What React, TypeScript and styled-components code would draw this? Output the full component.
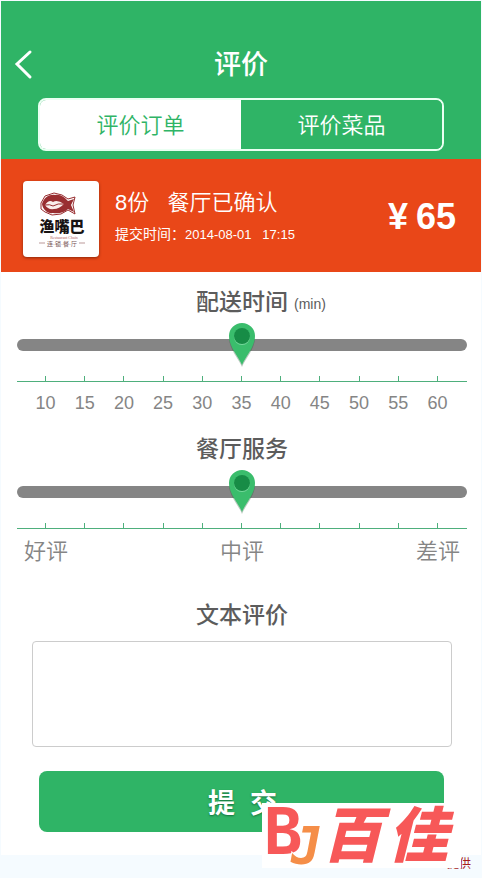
import React, { useState } from 'react';
import styled, { createGlobalStyle, css } from 'styled-components';

const sans = `"Liberation Sans", "Noto Sans CJK SC", sans-serif`;
const green = '#2fb466';

const GlobalStyle = createGlobalStyle`
  *, *::before, *::after { box-sizing: border-box; }
  body { margin: 0; background: #f5fbff; font-family: ${sans}; }
  h1, h2, p { margin: 0; }
  button, textarea, input { font-family: inherit; }
`;

const Page = styled.div`
  position: relative;
  padding: 1px 1px 0;
`;

const Screen = styled.main`
  background: #fff;
  padding-bottom: 23px;
`;

const Header = styled.header`
  background: ${green};
  padding: 40px 37px 8px;
`;

const TitleBar = styled.div`
  display: grid;
  grid-template-columns: 28px 1fr 28px;
  align-items: center;
  height: 48px;
  margin: 0 -28px 9px;
`;

const BackButton = styled.button`
  display: flex;
  padding: 0;
  border: 0;
  background: none;
  color: #fff;
  cursor: pointer;
`;

const Title = styled.h1`
  color: #fff;
  font-size: 27px;
  line-height: 48px;
  font-weight: 500;
  text-align: center;
`;

const Tabs = styled.div`
  display: grid;
  grid-template-columns: 1fr 1fr;
  height: 53px;
  border: 2px solid #eafff2;
  border-radius: 8px;
  overflow: hidden;
`;

const Tab = styled.button<{ $active: boolean }>`
  padding: 0 0 4px;
  border: 0;
  background: ${p => (p.$active ? '#fff' : green)};
  color: ${p => (p.$active ? green : '#fff')};
  font-size: 22px;
  font-weight: 350;
  cursor: pointer;
`;

const Order = styled.section`
  display: flex;
  align-items: center;
  gap: 16px;
  height: 113px;
  padding: 6px 25px 0 22px;
  background: #e94718;
  color: #fff;
`;

const Thumb = styled.div`
  display: flex;
  width: 76px;
  height: 76px;
  background: #fff;
  border-radius: 4px;
  box-shadow: 0 1px 3px rgba(80, 20, 0, 0.6);
`;

const OrderInfo = styled.div`
  flex: 1;
  padding-bottom: 4px;
  white-space: pre;
`;

const Status = styled.p`
  font-size: 22px;
  line-height: 32px;
  font-weight: 350;
`;

const Submitted = styled.p`
  font-size: 14px;
  line-height: 24px;
  margin-top: 3px;
`;

const Moment = styled.time`
  font-size: 13px;
`;

const Price = styled.strong`
  display: flex;
  gap: 8px;
  padding-bottom: 4px;
  font-size: 36px;
  line-height: 40px;
`;

const Group = styled.section`
  height: 147px;
  padding: 12px 14px 0 16px;
`;

const headingText = css`
  color: #5c5c5c;
  font-size: 23px;
  line-height: 36px;
  font-weight: 500;
  text-align: center;
`;

const Heading = styled.h2`
  ${headingText}
  display: grid;
  grid-template-columns: 1fr auto 1fr;
  height: 36px;

  &::before { content: ''; }
`;

const FieldLabel = styled.label`
  ${headingText}
  display: block;
`;

const Unit = styled.small`
  padding-left: 6px;
  font-size: 14px;
  line-height: 40px;
  font-weight: 400;
  text-align: left;
`;

const SliderBox = styled.div`
  position: relative;
  height: 48px;
  margin-top: 1px;
`;

const Range = styled.input`
  appearance: none;
  display: block;
  width: 100%;
  height: 48px;
  margin: 0;
  background: none;
  cursor: pointer;

  &::-webkit-slider-runnable-track {
    height: 12px;
    border-radius: 6px;
    background: #858585;
  }
  &::-webkit-slider-thumb {
    appearance: none;
    width: 28px;
    height: 12px;
    background: transparent;
  }
`;

const Marker = styled.div`
  position: absolute;
  top: 0;
  width: 32px;
  margin-left: -16px;
  height: 48px;
  pointer-events: none;
`;

const Ticks = styled.div`
  display: grid;
  grid-template-columns: repeat(11, 1fr);
  height: 13px;
  padding: 7px 10px 0 9px;
  border-bottom: 1px solid #4eaf7c;
`;

const Tick = styled.i`
  justify-self: center;
  width: 1px;
  background: #4eaf7c;
`;

const Scale = styled.div`
  display: grid;
  grid-template-columns: repeat(11, 1fr);
  padding: 0 10px 0 9px;
  color: #858585;
  font-size: 18px;
  line-height: 42px;
  text-align: center;
`;

const Ratings = styled.div`
  display: flex;
  justify-content: space-between;
  padding: 0 7px;
  color: #858585;
  font-size: 22px;
  line-height: 46px;
  font-weight: 350;
`;

const Review = styled.section`
  padding: 31px 29px 0 31px;
`;

const ReviewText = styled.textarea`
  display: block;
  width: 100%;
  height: 106px;
  margin-top: 8px;
  padding: 12px;
  border: 1px solid #ccc;
  border-radius: 4px;
  background: #fff;
  font-size: 16px;
  resize: none;
`;

const Submit = styled.button`
  display: block;
  width: calc(100% - 75px);
  height: 61px;
  margin: 24px 37px 0 38px;
  padding: 0 0 0 2px;
  border: 0;
  border-radius: 8px;
  background: ${green};
  color: #fff;
  font-size: 27px;
  font-weight: 700;
  white-space: pre;
  text-shadow: 0 1px 2px rgba(0, 70, 30, 0.6);
  cursor: pointer;
`;

const Credit = styled.p`
  padding-right: 10px;
  color: #a81c1c;
  font-size: 12px;
  line-height: 18px;
  text-align: right;
`;

const Watermark = styled.div`
  position: absolute;
  right: 21px;
  bottom: 5px;
  display: flex;
  background: #fff;
`;

function BackIcon() {
  return (
    <svg width="28" height="32" viewBox="0 0 28 32" fill="none" aria-hidden="true">
      <path d="M20 3 L7 15 L20 28" stroke="currentColor" strokeWidth="3" strokeLinecap="round" strokeLinejoin="miter" />
    </svg>
  );
}

function RestaurantLogo() {
  return (
    <svg width="76" height="76" viewBox="0 0 76 76" role="img" aria-label="渔嘴巴">
      <path d="M18 22 L22 15 L31 12 L39 14 L45 18 L52 16 L50 24 L52 33 L45 29 L38 33 L29 34 L22 31 L18 28Z" fill="none" stroke="#992e31" strokeWidth="1" strokeLinejoin="round" />
      <path d="M19 23 C21 16 27 13 32 14 C38 13 42 17 45 20 L51 18 L48 24 L51 31 L45 28 C41 32 35 33 30 32 C25 33 20 29 19 23Z" fill="#992e31" />
      <path d="M22 24 Q26 18 30 21 Q34 18 41 23 Q36 28 31 28 Q25 29 22 24Z" fill="#f9eeec" />
      <path d="M22 24 Q27 23 30 25 Q35 22 41 23" fill="none" stroke="#992e31" strokeWidth="1" />
      <text x="39" y="51" textAnchor="middle" fontSize="15" fontWeight="900" fill="#171313">渔嘴巴</text>
      <text x="41" y="58" textAnchor="middle" fontSize="4" fill="#b26461" fontFamily="Liberation Serif">Restaurant Chain</text>
      <path d="M16 62 H22 M56 62 H62" stroke="#b99" strokeWidth="1" />
      <text x="39" y="65" textAnchor="middle" fontSize="6" fill="#755">连·锁·餐·厅</text>
    </svg>
  );
}

function Pin() {
  return (
    <svg width="32" height="48" viewBox="0 0 32 48" aria-hidden="true">
      <path d="M16 45 C13 37 3 27 3 16 A13 13 0 0 1 29 16 C29 27 19 37 16 45Z" fill="#174f2c" opacity=".3" transform="translate(0 1)" />
      <path d="M16 44 C13 36 3 26 3 15 A13 13 0 0 1 29 15 C29 26 19 36 16 44Z" fill="#3abd6c" />
      <circle cx="16" cy="16" r="8" fill="#76d79b" />
      <circle cx="16" cy="15" r="8" fill="#178c46" />
    </svg>
  );
}

function BrandLogo() {
  return (
    <svg width="199" height="65" viewBox="0 0 199 65" role="img" aria-label="BJ 百佳">
      <text x="2" y="51" fontSize="64" fontWeight="700" fontFamily="DejaVu Sans Mono" fill="#f75858">B</text>
      <text x="29" y="61" fontSize="51" fontWeight="700" fontStyle="italic" fontFamily="DejaVu Sans Mono" fill="#f58e48" stroke="#fff" strokeWidth="2" paintOrder="stroke">J</text>
      <g fontSize="60" fontWeight="900" fontStyle="italic" fontFamily="Noto Sans CJK SC" fill="#f75858">
        <text x="60" y="54">百</text>
        <text x="126" y="54">佳</text>
      </g>
    </svg>
  );
}

const minutes = [10, 15, 20, 25, 30, 35, 40, 45, 50, 55, 60];

function Slider({ label, min, max }: { label: string; min: number; max: number }) {
  const [value, setValue] = useState((min + max) / 2);
  return (
    <>
      <SliderBox>
        <Range type="range" aria-label={label} min={min} max={max} value={value} onChange={e => setValue(Number(e.target.value))} />
        <Marker style={{ left: `${((value - min) / (max - min)) * 100}%` }}><Pin /></Marker>
      </SliderBox>
      <Ticks>{minutes.map(m => <Tick key={m} />)}</Ticks>
    </>
  );
}

export default function App() {
  const [tab, setTab] = useState(0);
  return (
    <Page lang="zh-CN">
      <GlobalStyle />
      <Screen>
        <Header>
          <TitleBar>
            <BackButton aria-label="返回"><BackIcon /></BackButton>
            <Title>评价</Title>
          </TitleBar>
          <Tabs>
            {['评价订单', '评价菜品'].map((name, i) => (
              <Tab key={name} $active={tab === i} aria-pressed={tab === i} onClick={() => setTab(i)}>{name}</Tab>
            ))}
          </Tabs>
        </Header>
        <Order>
          <Thumb><RestaurantLogo /></Thumb>
          <OrderInfo>
            <Status>8份   餐厅已确认</Status>
            <Submitted>提交时间：<Moment>2014-08-01   17:15</Moment></Submitted>
          </OrderInfo>
          <Price><span>¥</span><span>65</span></Price>
        </Order>
        <Group>
          <Heading><span>配送时间</span><Unit>(min)</Unit></Heading>
          <Slider label="配送时间" min={5} max={65} />
          <Scale>{minutes.map(m => <span key={m}>{m}</span>)}</Scale>
        </Group>
        <Group>
          <Heading><span>餐厅服务</span></Heading>
          <Slider label="餐厅服务" min={0} max={100} />
          <Ratings><span>好评</span><span>中评</span><span>差评</span></Ratings>
        </Group>
        <Review>
          <FieldLabel htmlFor="review">文本评价</FieldLabel>
          <ReviewText id="review" />
        </Review>
        <Submit>提  交</Submit>
      </Screen>
      <Credit>提供</Credit>
      <Watermark><BrandLogo /></Watermark>
    </Page>
  );
}
